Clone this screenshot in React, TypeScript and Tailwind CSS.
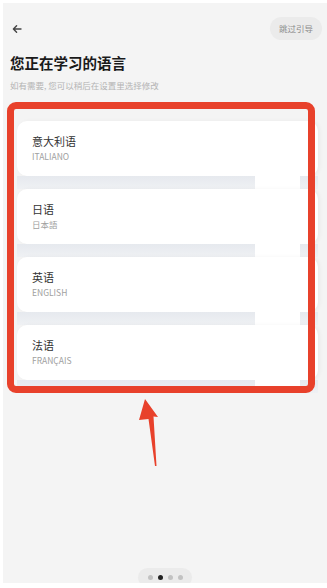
import React from "react";

const langs = [
  { name: "意大利语", sub: "ITALIANO" },
  { name: "日语", sub: "日本語" },
  { name: "英语", sub: "ENGLISH" },
  { name: "法语", sub: "FRANÇAIS" },
];

const Shadow = () => (
  <div className="flex h-[13px] mr-[9px] ml-[14px]">
    <div className="flex-1 bg-gradient-to-b from-[#e6e9ee] to-[#eff1f4]" />
    <div className="w-[45px] bg-white" />
    <div className="w-[18px] bg-gradient-to-b from-[#e6e9ee] to-[#eff1f4]" />
  </div>
);

const App = () => {
  return (
    <div
      className="w-[327px] h-[588px] bg-white pl-[3px] pt-[3px] pb-[5px]"
      style={{ fontFamily: '"Noto Sans CJK SC", "Noto Sans", sans-serif' }}
    >
      <div className="relative h-full bg-[#f4f4f4] flex flex-col overflow-hidden">
        {/* header */}
        <div className="flex items-center justify-between pt-[14px] pl-[9px] pr-[5px]">
          <svg width="10" height="10" viewBox="0 0 10 10" fill="none">
            <path
              d="M9 5H1.6M4.6 1.8L1.4 5L4.6 8.2"
              stroke="#444"
              strokeWidth="1.4"
              strokeLinecap="round"
              strokeLinejoin="round"
            />
          </svg>
          <div className="h-[23px] w-[52px] rounded-full bg-[#ebebeb] flex items-center justify-center text-[8.5px] text-[#8c8c8c]">
            跳过引导
          </div>
        </div>

        {/* title */}
        <div className="mt-[13px] pl-[7px] text-[14.5px] leading-[20px] font-bold text-[#1a1a1a]">
          您正在学习的语言
        </div>
        <div className="mt-[6px] pl-[7px] text-[8.5px] leading-[12px] text-[#b3b3b3]">
          如有需要, 您可以稍后在设置里选择修改
        </div>

        {/* cards */}
        <div className="mt-[30px] flex flex-col">
          {langs.map((l) => (
            <React.Fragment key={l.name}>
              <div className="ml-[14px] mr-[9px] h-[55px] rounded-[10px] bg-white pl-[15px] pt-[13px] shadow-[2px_0_4px_rgba(0,0,0,0.04)]">
                <div className="text-[11px] leading-[14px] text-[#333]">{l.name}</div>
                <div className="mt-[3px] text-[8.5px] leading-[11px] text-[#a0a0a0]">{l.sub}</div>
              </div>
              <Shadow />
            </React.Fragment>
          ))}
        </div>

        {/* page dots */}
        <div className="mt-auto mb-[-4px] mx-auto h-[19px] w-[54px] rounded-full bg-[#ebebeb] flex items-center justify-center gap-[5px]">
          <div className="w-[5px] h-[5px] rounded-full bg-[#c2c2c2]" />
          <div className="w-[5px] h-[5px] rounded-full bg-[#222]" />
          <div className="w-[5px] h-[5px] rounded-full bg-[#c2c2c2]" />
          <div className="w-[5px] h-[5px] rounded-full bg-[#c2c2c2]" />
        </div>

        {/* annotation overlay */}
        <div className="absolute left-[4px] top-[99px] w-[308px] h-[291px] border-[7.5px] border-[#e8412b] rounded-[9px]" />
        <svg
          className="absolute left-0 top-0"
          width="324"
          height="580"
          viewBox="3 3 324 580"
        >
          <polygon
            points="145,399 158,417 153.5,416.5 156.5,466 155,466 148.5,419 139,420"
            fill="#e8412b"
          />
        </svg>
      </div>
    </div>
  );
};

export default App;
